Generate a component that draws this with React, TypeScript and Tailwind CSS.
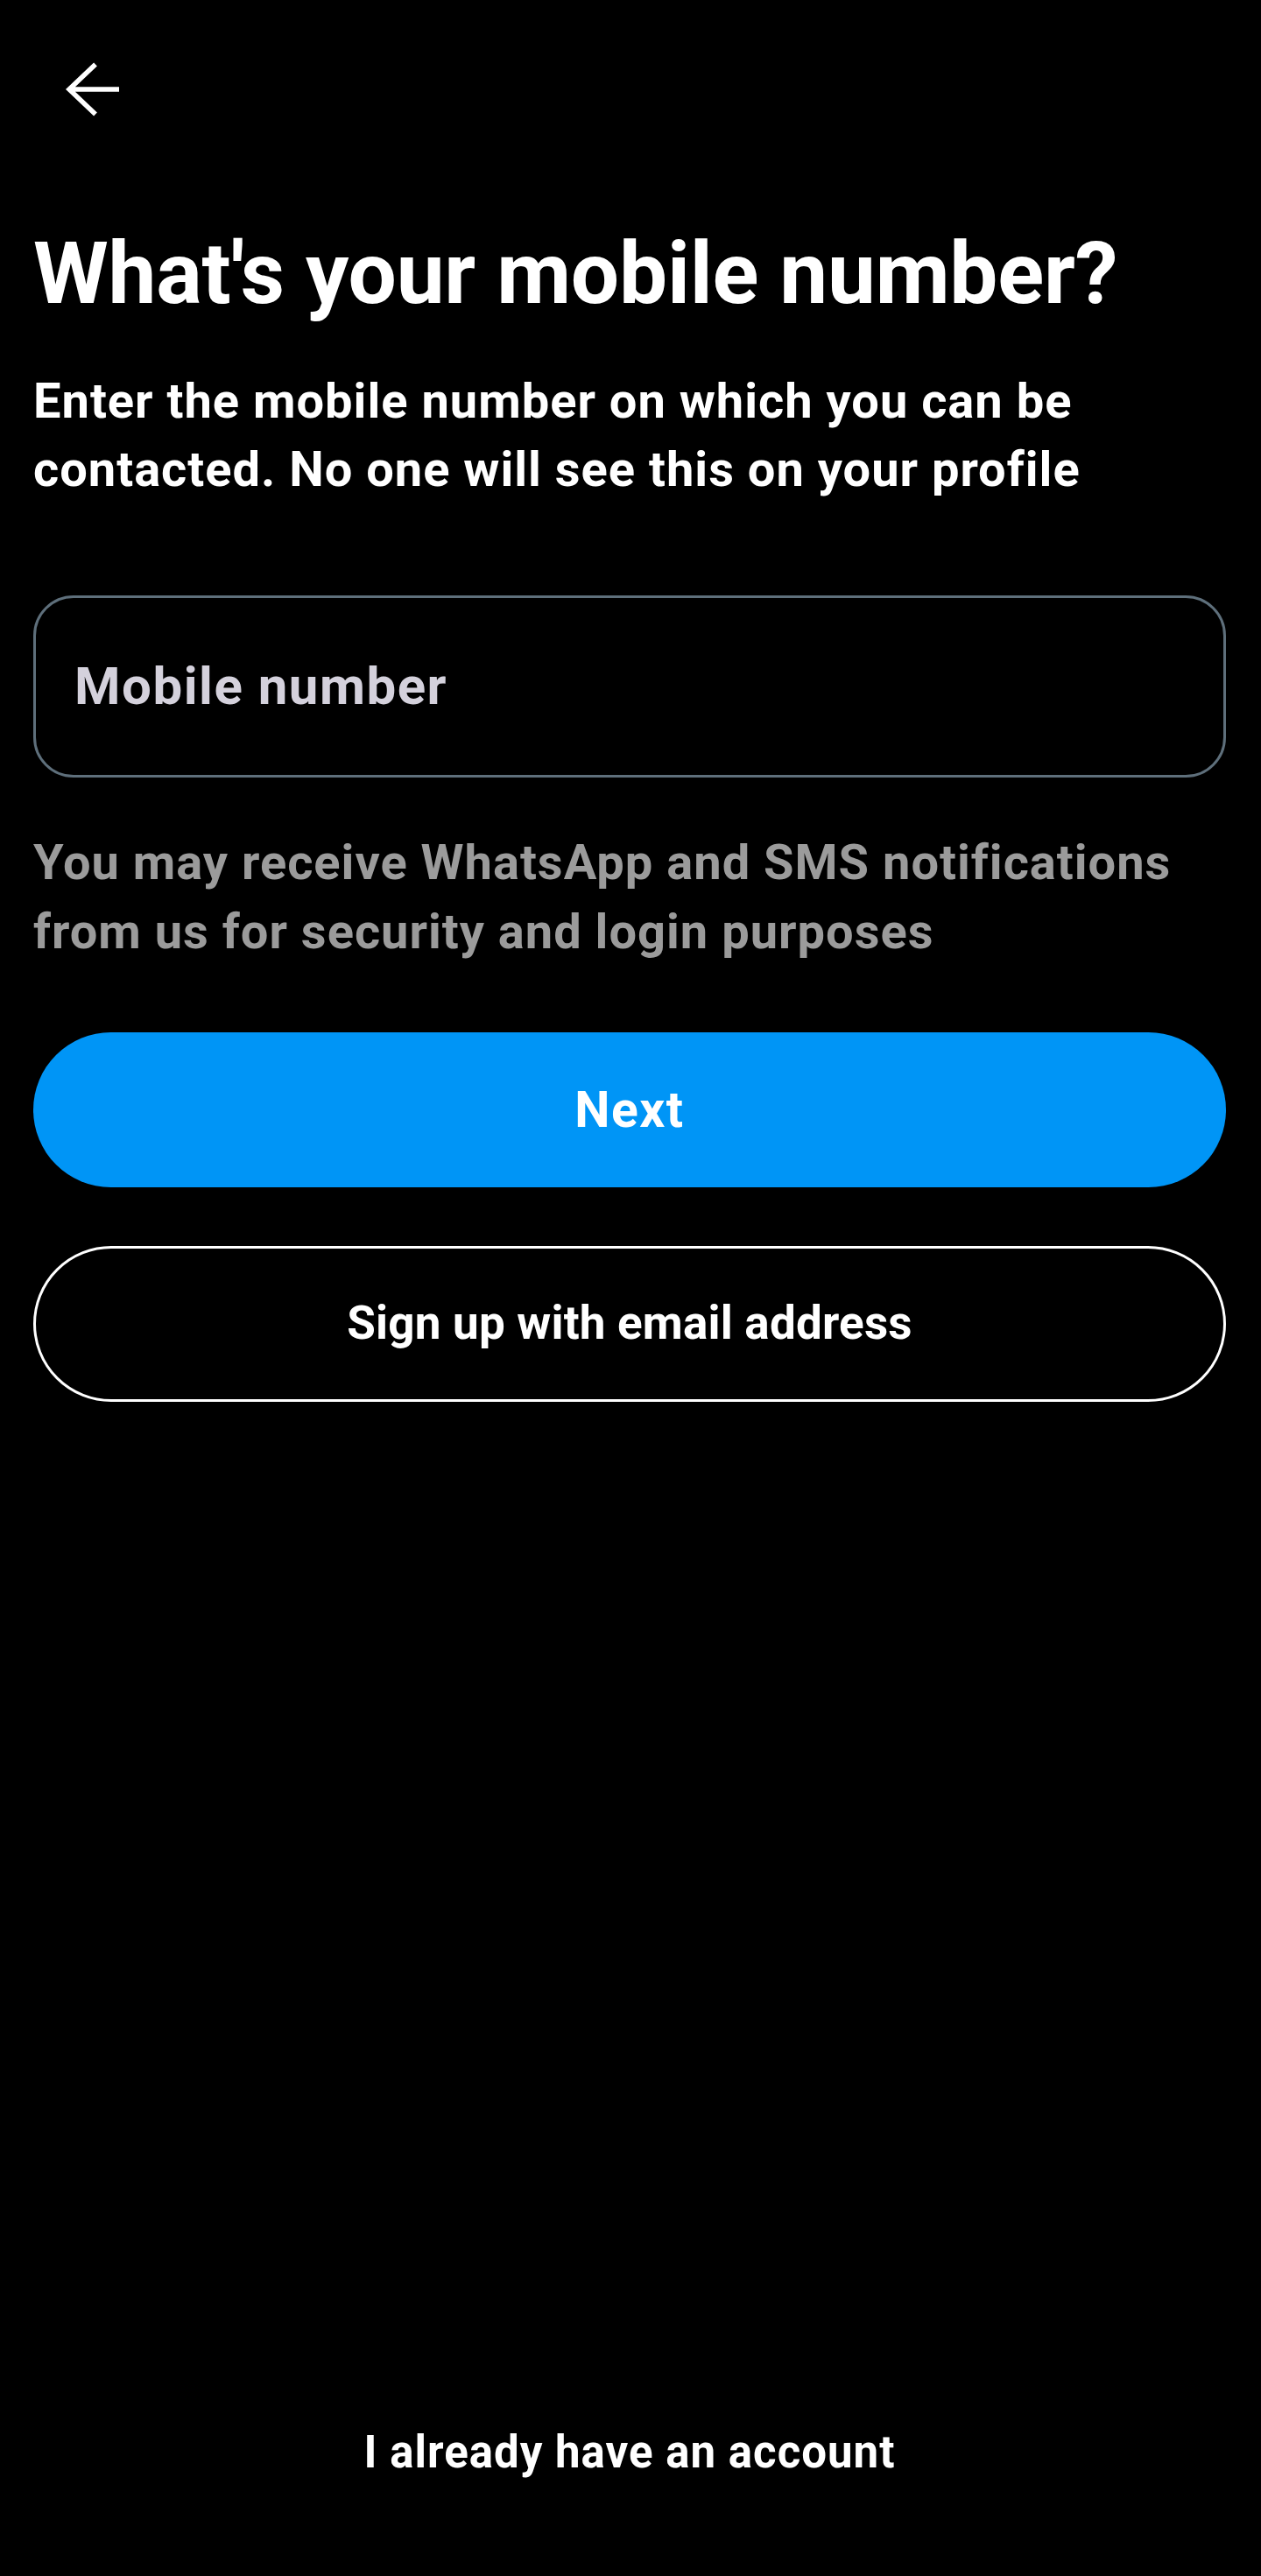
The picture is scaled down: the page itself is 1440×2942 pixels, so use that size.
import type { FC } from 'react'

const BackArrow: FC = () => (
  <svg width="62" height="62" viewBox="0 0 62 62" fill="none" aria-hidden="true">
    <path d="M61 31H4M34 2.5L4 31l30 28.5" stroke="#ffffff" strokeWidth="5.5" />
  </svg>
)

const App: FC = () => {
  return (
    <div className="flex min-h-[2942px] w-full flex-col bg-black pl-[38px] pr-[40px] font-['Roboto','Liberation_Sans',sans-serif] text-white">
      <div className="pt-[71px] pl-[37px]">
        <button type="button" aria-label="Back" className="block">
          <BackArrow />
        </button>
      </div>

      <h1 className="mt-[121px] text-[98px] font-bold leading-[118px] tracking-[-0.2px]">
        What's your mobile number?
      </h1>

      <p className="mt-[47px] text-[56px] font-bold leading-[78px] tracking-[1px]">
        Enter the mobile number on which you can be
        <br />
        contacted. No one will see this on your profile
      </p>

      <div className="mt-[105px] flex h-[208px] items-center rounded-[46px] border-[3px] border-[#5e6f7b] pl-[44px]">
        <span className="text-[60px] font-bold tracking-[1.5px] text-[#d4d1dc]">Mobile number</span>
      </div>

      <p className="mt-[58px] text-[56px] font-bold leading-[79px] tracking-[1px] text-[#9b9b9b]">
        You may receive WhatsApp and SMS notifications
        <br />
        from us for security and login purposes
      </p>

      <button
        type="button"
        className="mt-[75px] flex h-[177px] w-full items-center justify-center rounded-full bg-[#0095f6] text-[57px] font-bold tracking-[1.5px]"
      >
        Next
      </button>

      <button
        type="button"
        className="mt-[67px] flex h-[178px] w-full items-center justify-center rounded-full border-[3px] border-white text-[53px] font-bold tracking-[0.2px]"
      >
        Sign up with email address
      </button>

      <div className="mt-auto pb-[109px] text-center text-[51px] font-bold leading-[64px] tracking-[1px]">
        I already have an account
      </div>
    </div>
  )
}

export default App
